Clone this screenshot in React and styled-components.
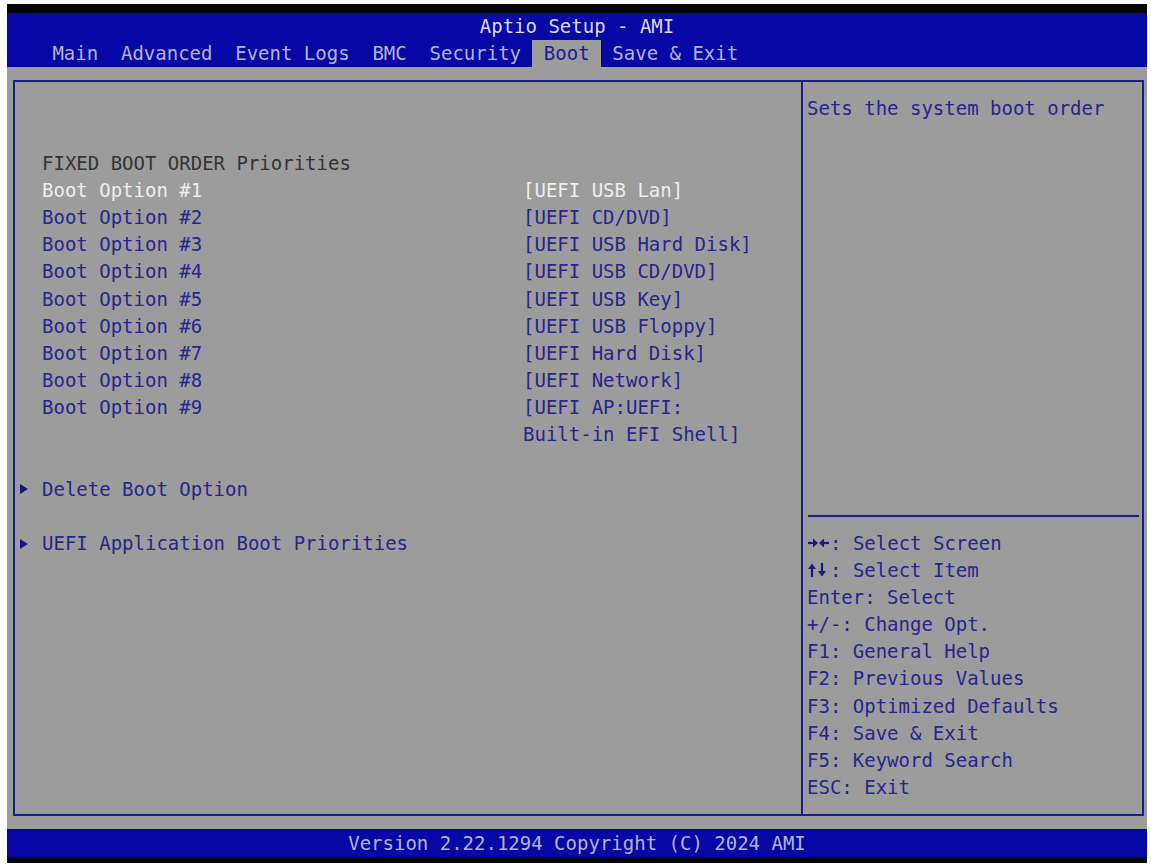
import React from 'react'
import styled, { createGlobalStyle } from 'styled-components'

const ROW = 27.18

const GlobalStyle = createGlobalStyle`
  html, body {
    margin: 0;
    padding: 0;
    background: #ffffff;
  }
  body {
    font-family: "DejaVu Sans Mono", "Liberation Mono", monospace;
    font-size: 19px;
  }
`

const Screen = styled.div`
  width: 1140px;
  margin: 4px 0 0 7px;
  display: flex;
  flex-direction: column;
  background: #9c9c9c;
`

const BlackStrip = styled.div`
  height: ${p => p.$h}px;
  background: #050505;
`

const Header = styled.header`
  background: #0707a6;
  display: flex;
  flex-direction: column;
`

const Title = styled.div`
  height: ${ROW}px;
  line-height: ${ROW}px;
  text-align: center;
  color: #dcdcea;
`

const TabRow = styled.nav`
  height: ${ROW}px;
  display: flex;
  padding-left: 34px;
`

const Tab = styled.span`
  line-height: ${ROW}px;
  padding: 0 11.4px;
  white-space: pre;
  color: ${p => (p.$active ? '#1a1a9c' : '#b4b4d4')};
  background: ${p => (p.$active ? '#9c9c9c' : 'transparent')};
`

const Body = styled.main`
  height: 762px;
  box-sizing: border-box;
  padding: 13px 3px 13px 6px;
`

const Panel = styled.div`
  height: 100%;
  box-sizing: border-box;
  border: 2px solid #1c1c86;
  display: grid;
  grid-template-columns: 786px 2px 1fr;
`

const VDivider = styled.div`
  background: #1c1c86;
`

const LeftColumn = styled.section`
  padding: 13px 0 0 4px;
  display: flex;
  flex-direction: column;
`

const Row = styled.div`
  height: ${ROW}px;
  line-height: ${ROW}px;
  display: grid;
  grid-template-columns: 23px 481px 1fr;
  white-space: pre;
  color: ${p => p.$color || '#26268e'};
`

const Marker = styled.span`
  display: flex;
  align-items: center;
`

const Triangle = styled.span`
  width: 0;
  height: 0;
  margin-left: 1px;
  border-top: 5px solid transparent;
  border-bottom: 5px solid transparent;
  border-left: 8px solid #16167e;
`

const RightColumn = styled.aside`
  display: flex;
  flex-direction: column;
`

const HelpText = styled.div`
  flex: 1;
  padding: 13px 0 0 4px;
  line-height: ${ROW}px;
  color: #26268e;
`

const HDivider = styled.div`
  height: 2px;
  margin: 0 3px 0 5px;
  background: #1c1c86;
`

const KeyList = styled.div`
  padding: 12.5px 0 13px 4px;
  display: flex;
  flex-direction: column;
`

const KeyLine = styled.div`
  height: ${ROW}px;
  line-height: ${ROW}px;
  display: flex;
  align-items: center;
  white-space: pre;
  color: #26268e;
`

const ArrowIcon = styled.svg`
  width: 23px;
  height: 14px;
  flex: none;
  fill: #1a1a80;
  stroke: #1a1a80;
`

function LeftRight() {
  return (
    <ArrowIcon viewBox="0 0 23 14">
      <path d="M1 7H8" strokeWidth="2.2" />
      <path d="M6 2.5L11 7L6 11.5Z" stroke="none" />
      <path d="M15 7H22" strokeWidth="2.2" />
      <path d="M17 2.5L12 7L17 11.5Z" stroke="none" />
    </ArrowIcon>
  )
}

function UpDown() {
  return (
    <ArrowIcon viewBox="0 0 23 14">
      <path d="M5 5V14" strokeWidth="2.2" />
      <path d="M1 6L5 0.5L9 6Z" stroke="none" />
      <path d="M15 0V9" strokeWidth="2.2" />
      <path d="M11 8L15 13.5L19 8Z" stroke="none" />
    </ArrowIcon>
  )
}

const Footer = styled.footer`
  height: 28px;
  line-height: 28px;
  background: #0707a6;
  color: #b4b4cc;
  text-align: center;
`

const tabs = ['Main', 'Advanced', 'Event Logs', 'BMC', 'Security', 'Boot', 'Save & Exit']

const leftRows = [
  {},
  {},
  { label: 'FIXED BOOT ORDER Priorities', color: '#343434' },
  { label: 'Boot Option #1', value: '[UEFI USB Lan]', color: '#eeeeee' },
  { label: 'Boot Option #2', value: '[UEFI CD/DVD]' },
  { label: 'Boot Option #3', value: '[UEFI USB Hard Disk]' },
  { label: 'Boot Option #4', value: '[UEFI USB CD/DVD]' },
  { label: 'Boot Option #5', value: '[UEFI USB Key]' },
  { label: 'Boot Option #6', value: '[UEFI USB Floppy]' },
  { label: 'Boot Option #7', value: '[UEFI Hard Disk]' },
  { label: 'Boot Option #8', value: '[UEFI Network]' },
  { label: 'Boot Option #9', value: '[UEFI AP:UEFI:' },
  { value: 'Built-in EFI Shell]' },
  {},
  { label: 'Delete Boot Option', submenu: true },
  {},
  { label: 'UEFI Application Boot Priorities', submenu: true },
]

const keys = [
  { icon: <LeftRight />, text: ': Select Screen' },
  { icon: <UpDown />, text: ': Select Item' },
  { text: 'Enter: Select' },
  { text: '+/-: Change Opt.' },
  { text: 'F1: General Help' },
  { text: 'F2: Previous Values' },
  { text: 'F3: Optimized Defaults' },
  { text: 'F4: Save & Exit' },
  { text: 'F5: Keyword Search' },
  { text: 'ESC: Exit' },
]

export default function App() {
  return (
    <>
      <GlobalStyle />
      <Screen>
        <BlackStrip $h={9} />
        <Header>
          <Title>Aptio Setup - AMI</Title>
          <TabRow>
            {tabs.map(t => (
              <Tab key={t} $active={t === 'Boot'}>{t}</Tab>
            ))}
          </TabRow>
        </Header>

        <Body>
          <Panel>
            <LeftColumn>
              {leftRows.map((r, i) => (
                <Row key={i} $color={r.color}>
                  <Marker>{r.submenu && <Triangle />}</Marker>
                  <span>{r.label || ''}</span>
                  <span>{r.value || ''}</span>
                </Row>
              ))}
            </LeftColumn>
            <VDivider />
            <RightColumn>
              <HelpText>Sets the system boot order</HelpText>
              <HDivider />
              <KeyList>
                {keys.map((k, i) => (
                  <KeyLine key={i}>
                    {k.icon}
                    {k.text}
                  </KeyLine>
                ))}
              </KeyList>
            </RightColumn>
          </Panel>
        </Body>

        <Footer>Version 2.22.1294 Copyright (C) 2024 AMI</Footer>
        <BlackStrip $h={6} />
      </Screen>
    </>
  )
}
